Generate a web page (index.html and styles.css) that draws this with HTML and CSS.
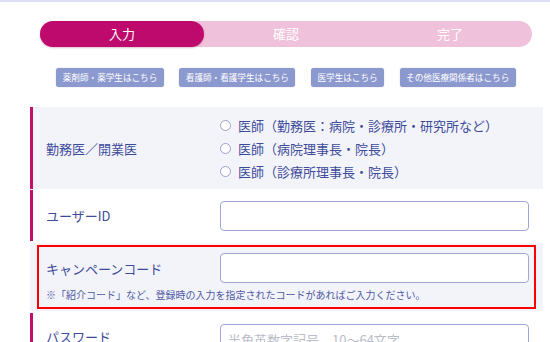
FILE: index.html
```html
<!DOCTYPE html>
<html lang="ja">
<head>
<meta charset="utf-8">
<link rel="stylesheet" href="styles.css">
</head>
<body>
<div class="page">
  <div class="steps">
    <div class="step active">入力</div>
    <div class="step">確認</div>
    <div class="step">完了</div>
  </div>
  <div class="links">
    <a class="link">薬剤師・薬学生はこちら</a>
    <a class="link">看護師・看護学生はこちら</a>
    <a class="link">医学生はこちら</a>
    <a class="link">その他医療関係者はこちら</a>
  </div>
  <div class="form">
    <div class="row row-shaded row-radio">
      <div class="label">勤務医／開業医</div>
      <div class="radios">
        <label class="radio"><span class="circle"></span>医師（勤務医：病院・診療所・研究所など）</label>
        <label class="radio"><span class="circle"></span>医師（病院理事長・院長）</label>
        <label class="radio"><span class="circle"></span>医師（診療所理事長・院長）</label>
      </div>
    </div>
    <div class="row row-user">
      <div class="label">ユーザーID</div>
      <div class="input"></div>
    </div>
    <div class="row-campaign">
      <div class="highlight">
        <div class="campaign-line">
          <div class="label">キャンペーンコード</div>
          <div class="input"></div>
        </div>
        <div class="note">※「紹介コード」など、登録時の入力を指定されたコードがあればご入力ください。</div>
      </div>
    </div>
    <div class="row row-pass">
      <div class="label">パスワード</div>
      <div class="input"><span class="placeholder">半角英数字記号、10〜64文字</span></div>
    </div>
  </div>
</div>
</body>
</html>
```
FILE: styles.css
```css
html, body {
  margin: 0;
  padding: 0;
  background: #ffffff;
  overflow: hidden;
}
body {
  font-family: "Noto Sans CJK JP", "Noto Sans", sans-serif;
  color: #3e4b9b;
  border-top: 2px solid #dde0f2;
  height: 340px;
}
.page {
  width: 550px;
}
.steps {
  display: flex;
  margin: 19px 0 0 40px;
  width: 492px;
  height: 26px;
  background: #efc1da;
  border-radius: 13px;
}
.step {
  flex: 1;
  text-align: center;
  color: #ffffff;
  font-size: 13px;
  line-height: 26px;
  border-radius: 13px;
}
.step.active {
  background: #bd0a6c;
  box-shadow: 0 1px 2px rgba(120, 0, 60, 0.25);
}
.links {
  display: flex;
  justify-content: center;
  gap: 15.5px;
  width: 492px;
  margin: 21px 0 0 40px;
}
.link {
  display: block;
  background: #8c99cf;
  color: #ffffff;
  font-size: 8.6px;
  line-height: 19px;
  height: 19px;
  padding: 0 6.5px;
  border-radius: 3px;
  box-shadow: 0 0 1px rgba(60, 70, 140, 0.5);
}
.form {
  margin: 20px 0 0 30px;
  width: 513px;
}
.row {
  display: flex;
  align-items: center;
  border-left: 3px solid #c0116f;
  box-sizing: border-box;
}
.row-shaded {
  background: #f3f4fa;
}
.label {
  width: 187px;
  padding-left: 13px;
  font-size: 13px;
  flex-shrink: 0;
  box-sizing: border-box;
}
.row-radio {
  height: 82px;
}
.radios {
  display: flex;
  flex-direction: column;
  padding-top: 1px;
}
.radio {
  display: flex;
  align-items: center;
  font-size: 13px;
  line-height: 23px;
  height: 23px;
}
.circle {
  width: 9px;
  height: 9px;
  border: 1px solid #9aa1cb;
  border-radius: 50%;
  background: #ffffff;
  margin-right: 7px;
}
.input {
  width: 309px;
  height: 30px;
  border: 1px solid #9ea6d6;
  border-radius: 4px;
  box-sizing: border-box;
  background: #ffffff;
  display: flex;
  align-items: center;
}
.row-user {
  margin-top: 1px;
  height: 51px;
}
.row-campaign {
  margin-top: 2px;
  background: #f3f4fa;
  padding: 2px 7px 2px 7px;
}
.highlight {
  border: 2px solid #ff0000;
  padding: 6px 5px 5px 7px;
}
.campaign-line {
  display: flex;
  align-items: center;
}
.highlight .label {
  width: 174px;
  padding-left: 0;
}
.note {
  font-size: 10px;
  line-height: 14px;
  margin-top: 5px;
  color: #4e59a4;
}
.row-pass {
  margin-top: 2px;
  height: 48px;
  align-items: flex-start;
  padding-top: 11px;
}
.row-pass .label {
  line-height: 26px;
}
.placeholder {
  color: #b9bcc8;
  font-size: 13px;
  padding-left: 7px;
}
```
